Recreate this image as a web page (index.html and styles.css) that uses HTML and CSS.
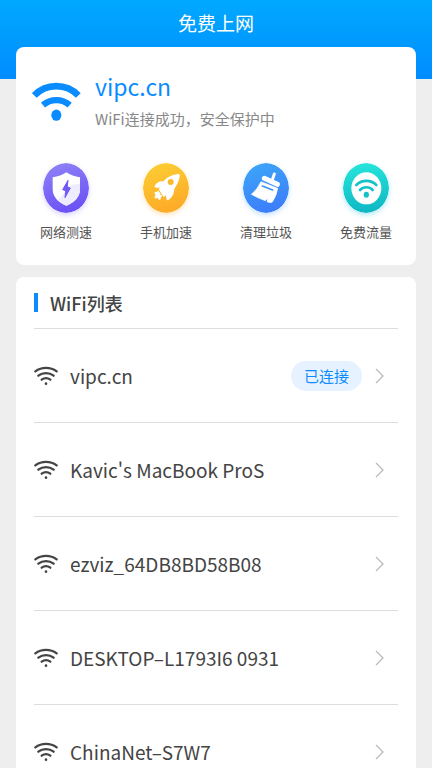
FILE: index.html
```html
<!DOCTYPE html>
<html lang="zh-CN">
<head>
<meta charset="utf-8">
<meta name="viewport" content="width=device-width, initial-scale=1">
<title>免费上网</title>
<link rel="stylesheet" href="styles.css">
</head>
<body>
<svg class="defs" aria-hidden="true">
  <defs>
    <linearGradient id="purple" x2="0.3" y2="1"><stop stop-color="#9184f6"/><stop offset="1" stop-color="#6d54f6"/></linearGradient>
    <linearGradient id="yellow" x2="0.3" y2="1"><stop stop-color="#fcd034"/><stop offset="1" stop-color="#fdac28"/></linearGradient>
    <linearGradient id="blue" x2="0.3" y2="1"><stop stop-color="#3ca8f8"/><stop offset="1" stop-color="#3d7ffb"/></linearGradient>
    <linearGradient id="teal" x2="0.1" y2="1"><stop stop-color="#27e6dc"/><stop offset="1" stop-color="#0fb9c4"/></linearGradient>
    <symbol id="wifi" viewBox="0 0 72 60">
      <g fill="none" stroke="currentColor" stroke-width="7" stroke-linecap="round">
        <path d="M4 16A54 54 0 0 1 68 16"/>
        <path d="M13 29A38 38 0 0 1 59 29"/>
        <path d="M23 41A22 22 0 0 1 49 41"/>
      </g>
      <circle cx="36" cy="53" r="4" fill="currentColor"/>
    </symbol>
    <symbol id="chevron" viewBox="0 0 10 18">
      <path d="M1 2L8 9L1 16" fill="none" stroke="currentColor" stroke-width="1.300"/>
    </symbol>
  </defs>
</svg>
<div class="app">
  <header class="topbar"><h1 class="topbar-title">免费上网</h1></header>
  <main class="content">
    <section class="card status-card">
      <div class="status">
        <svg class="status-icon" viewBox="0 0 147 116" aria-hidden="true">
          <path d="M7 40A92 92 0 0 1 139 40" fill="none" stroke="currentColor" stroke-width="20"/>
          <path d="M33 69A60 60 0 0 1 113 69" fill="none" stroke="currentColor" stroke-width="19"/>
          <ellipse cx="73" cy="99" rx="15" ry="17" fill="currentColor"/>
        </svg>
        <div>
          <h2 class="status-name">vipc.cn</h2>
          <p class="status-text">WiFi连接成功，安全保护中</p>
        </div>
      </div>
      <nav class="actions">
        <button class="action" type="button">
          <svg class="action-icon purple" viewBox="0 0 138 150" aria-hidden="true">
            <ellipse cx="69" cy="75" rx="69" ry="75" fill="url(#purple)"/>
            <path d="M70 28Q88 40 111 43V78Q111 111 70 128Q29 111 29 78V43Q53 40 70 28Z" fill="#fff"/>
            <path d="M111 62V78Q111 111 70 128Q54 121 44 111L87 65Z" fill="#eeecff"/>
            <path d="M75 52L59 80L68 83L66 104L82 75L73 71Z" fill="#6f5bf3" stroke="#6f5bf3" stroke-width="3" stroke-linejoin="round"/>
          </svg>
          <span>网络测速</span>
        </button>
        <button class="action" type="button">
          <svg class="action-icon yellow" viewBox="0 0 138 150" aria-hidden="true">
            <ellipse cx="69" cy="75" rx="69" ry="75" fill="url(#yellow)"/>
            <path d="M107 33Q112 33 110 40Q108 59 94 77Q94 99 76 111Q71 114 70 106L68 97L63 102Q57 97 54 90Q50 83 47 78L52 74L39 74Q32 73 36 67Q45 53 61 55Q77 36 107 33Z" fill="#fff"/>
            <path d="M47 82Q46 89 52 90Q50 97 57 97Q58 103 53 103Q55 108 51 111Q45 110 44 104Q39 108 34 105Q38 99 37 94Q32 90 36 86Q42 89 47 82Z" fill="#fff"/>
            <circle cx="83" cy="57" r="9" fill="#fdb92e"/>
          </svg>
          <span>手机加速</span>
        </button>
        <button class="action" type="button">
          <svg class="action-icon blue" viewBox="0 0 138 150" aria-hidden="true">
            <ellipse cx="69" cy="75" rx="69" ry="75" fill="url(#blue)"/>
            <path d="M94 33L87 53" stroke="#fff" stroke-width="9" stroke-linecap="round"/>
            <path d="M64 46L103 64" stroke="#fff" stroke-width="15" stroke-linecap="round"/>
            <path d="M54 56L104 76Q101 98 88 117Q83 121 72 116L75 105L67 113Q46 106 25 94Q43 80 54 56Z" fill="#fff" stroke="#fff" stroke-width="2" stroke-linejoin="round"/>
            <path d="M58 69L89 81" stroke="#3b93fa" stroke-width="5" stroke-linecap="round"/>
          </svg>
          <span>清理垃圾</span>
        </button>
        <button class="action" type="button">
          <svg class="action-icon teal" viewBox="0 0 138 150" aria-hidden="true">
            <ellipse cx="69" cy="75" rx="69" ry="75" fill="url(#teal)"/>
            <ellipse cx="70" cy="76" rx="45" ry="48" fill="#fff"/>
            <g fill="none" stroke="#16c2ca" stroke-width="8" stroke-linecap="round">
              <path d="M40 66A43 43 0 0 1 100 66"/>
              <path d="M51 81A26 26 0 0 1 89 81"/>
            </g>
            <ellipse cx="70" cy="95" rx="8" ry="9" fill="#16c2ca"/>
          </svg>
          <span>免费流量</span>
        </button>
      </nav>
    </section>
    <section class="card list-card">
      <h2 class="list-title">WiFi列表</h2>
      <ul class="list">
        <li><a class="row" href="#"><svg class="row-icon" aria-hidden="true"><use href="#wifi"/></svg><span class="row-name">vipc.cn</span><span class="badge">已连接</span><svg class="chevron" aria-hidden="true"><use href="#chevron"/></svg></a></li>
        <li><a class="row" href="#"><svg class="row-icon" aria-hidden="true"><use href="#wifi"/></svg><span class="row-name">Kavic's MacBook ProS</span><svg class="chevron" aria-hidden="true"><use href="#chevron"/></svg></a></li>
        <li><a class="row" href="#"><svg class="row-icon" aria-hidden="true"><use href="#wifi"/></svg><span class="row-name">ezviz_64DB8BD58B08</span><svg class="chevron" aria-hidden="true"><use href="#chevron"/></svg></a></li>
        <li><a class="row" href="#"><svg class="row-icon" aria-hidden="true"><use href="#wifi"/></svg><span class="row-name">DESKTOP–L1793I6 0931</span><svg class="chevron" aria-hidden="true"><use href="#chevron"/></svg></a></li>
        <li><a class="row" href="#"><svg class="row-icon" aria-hidden="true"><use href="#wifi"/></svg><span class="row-name">ChinaNet–S7W7</span><svg class="chevron" aria-hidden="true"><use href="#chevron"/></svg></a></li>
      </ul>
    </section>
  </main>
</div>
</body>
</html>
```
FILE: styles.css
```css
* {
  box-sizing: border-box;
  margin: 0;
  padding: 0;
}

body {
  background: #eee;
  color: #444;
  font-family: "Noto Sans CJK SC", sans-serif;
}

.defs {
  position: absolute;
  width: 0;
  height: 0;
}

.app {
  height: 100vh;
  overflow-x: hidden;
  overflow-y: auto;
  scrollbar-width: none;
}

.topbar {
  height: 79px;
  padding-top: 10px;
  background: linear-gradient(#00a9ff, #008cff);
  color: #fff;
  text-align: center;
}

.topbar-title {
  font-size: 19px;
  line-height: 26px;
  font-weight: 400;
}

.content {
  display: grid;
  gap: 12px;
  margin-top: -32px;
  padding: 0 16px;
}

.card {
  background: #fff;
  border-radius: 8px;
}

.status-card {
  padding: 24px 0 23px;
}

.status {
  display: flex;
  align-items: center;
  gap: 14px;
  padding: 0 16px;
}

.status-icon {
  width: 49px;
  height: 39px;
  color: #0a8cff;
}

.status-name {
  color: #0a8cff;
  font-size: 23px;
  line-height: 30px;
  font-weight: 400;
}

.status-text {
  margin-top: 6px;
  color: #888;
  font-size: 15px;
  line-height: 24px;
}

.actions {
  display: grid;
  grid-template-columns: repeat(4, 1fr);
  margin-top: 32px;
}

.action {
  display: flex;
  flex-direction: column;
  align-items: center;
  gap: 9px;
  border: 0;
  background: none;
  color: #555;
  font: inherit;
  font-size: 13px;
  line-height: 20px;
}

.action-icon {
  width: 46px;
  height: 50px;
  border-radius: 50%;
}

.purple { box-shadow: 0 2px 5px #6d54f640; }
.yellow { box-shadow: 0 2px 5px #fdac2850; }
.blue { box-shadow: 0 2px 5px #3d9ffb50; }
.teal { box-shadow: 0 2px 5px #0fb9e450; }

.list-card {
  padding: 0 18px;
}

.list-title {
  display: flex;
  align-items: center;
  gap: 12px;
  height: 52px;
  border-bottom: 1px solid #ddd;
  font-size: 18px;
  font-weight: 500;
}

.list-title::before {
  width: 4px;
  height: 19px;
  background: #0a8cff;
  content: "";
}

.list {
  list-style: none;
}

.row {
  display: flex;
  align-items: center;
  height: 94px;
  border-bottom: 1px solid #ddd;
  color: inherit;
  text-decoration: none;
}

.row-icon {
  width: 24px;
  height: 20px;
  margin-right: 12px;
}

.row-name {
  flex: 1;
  font-size: 19px;
  line-height: 28px;
}

.badge {
  margin-right: 13px;
  padding: 0 13px;
  border-radius: 15px;
  background: #e6f2ff;
  color: #0a8cff;
  font-size: 15px;
  line-height: 30px;
}

.chevron {
  width: 10px;
  height: 18px;
  margin-right: 13px;
  color: #bbb;
}
```
